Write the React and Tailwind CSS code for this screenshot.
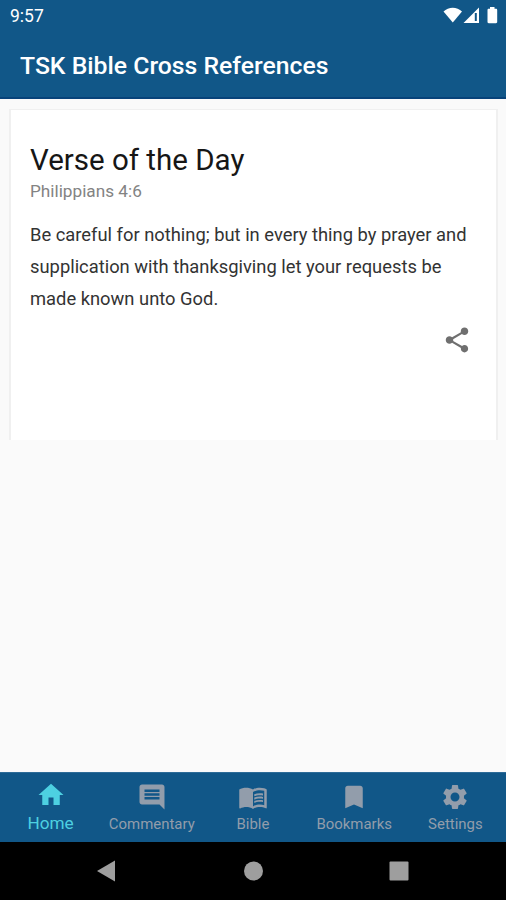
import React from "react";
import {
  MdBookmark,
  MdComment,
  MdHome,
  MdMenuBook,
  MdSettings,
  MdShare,
} from "react-icons/md";

const StatusBar = () => {
  return (
    <div className="flex h-8 items-center justify-between pl-2.5 pr-[7px] text-white">
      <span className="text-[17.5px] leading-8">9:57</span>
      <svg width="56" height="18" viewBox="0 0 56 18" fill="currentColor">
        <path d="M0.5 4.6C5.5 -0.6 14 -0.6 19 4.6L9.8 15.5z" />
        <path d="M36 0.5V16H20.5z" />
        <path d="M31.8 6h2v8h-2z" fill="#115788" />
        <path d="M47 0h4.5v1.8H53c.7 0 1.2.5 1.2 1.2v12c0 .7-.5 1.2-1.2 1.2h-7.3c-.7 0-1.2-.5-1.2-1.2V3c0-.7.5-1.2 1.2-1.2H47z" />
      </svg>
    </div>
  );
};

const VerseCard = () => {
  return (
    <div className="ml-[9px] mr-2 mt-2.5 h-[331px] border-x-2 border-t border-[#f0f0f0] bg-white px-[19px] pt-8">
      <h2 className="text-[29.5px] leading-9 text-[#161616]">
        Verse of the Day
      </h2>
      <p className="text-[17.2px] leading-[26px] text-[#838383]">
        Philippians 4:6
      </p>
      <p className="mt-[15px] whitespace-nowrap text-[18.35px] leading-8 text-[#333333]">
        Be careful for nothing; but in every thing by prayer and
        <br />
        supplication with thanksgiving let your requests be
        <br />
        made known unto God.
      </p>
      <div className="mt-2.5 flex justify-end pr-[5px]">
        <MdShare className="size-[30px] text-[#6f6f6f]" />
      </div>
    </div>
  );
};

const tabs = [
  { label: "Commentary", Icon: MdComment },
  { label: "Bible", Icon: MdMenuBook },
  { label: "Bookmarks", Icon: MdBookmark },
  { label: "Settings", Icon: MdSettings },
];

const TabBar = () => {
  return (
    <nav className="grid h-[70px] grid-cols-5 border-t border-[#2d6b98] bg-[#115788]">
      <a href="#" className="flex flex-col items-center pt-[7px] text-[#4dd0e1]">
        <MdHome className="size-[30px]" />
        <span className="text-[17.2px] leading-[26px]">Home</span>
      </a>
      {tabs.map(({ label, Icon }) => (
        <a
          key={label}
          href="#"
          className="flex flex-col items-center pt-[9px] text-[#929dab]"
        >
          <Icon className="size-[30px]" />
          <span className="text-[14.95px] leading-6">{label}</span>
        </a>
      ))}
    </nav>
  );
};

const SystemNav = () => {
  return (
    <div className="flex h-[58px] items-center justify-center bg-black text-[#9e9e9e]">
      <svg width="314" height="22" viewBox="0 0 314 22" fill="currentColor">
        <path d="M1 11 19 0.5v21z" />
        <circle cx="157.5" cy="11" r="9.5" />
        <rect x="293.5" y="1.5" width="19" height="19" rx="1" />
      </svg>
    </div>
  );
};

const App = () => {
  return (
    <div className="flex h-[900px] w-[506px] flex-col overflow-hidden bg-[#fafafa] font-[Roboto,sans-serif]">
      <header className="h-[99px] border-b-2 border-[#08437a] bg-[#115788]">
        <StatusBar />
        <h1 className="pl-5 text-[24.75px] font-medium leading-[68px] text-white">
          TSK Bible Cross References
        </h1>
      </header>
      <main className="flex-1">
        <VerseCard />
      </main>
      <TabBar />
      <SystemNav />
    </div>
  );
};

export default App;
